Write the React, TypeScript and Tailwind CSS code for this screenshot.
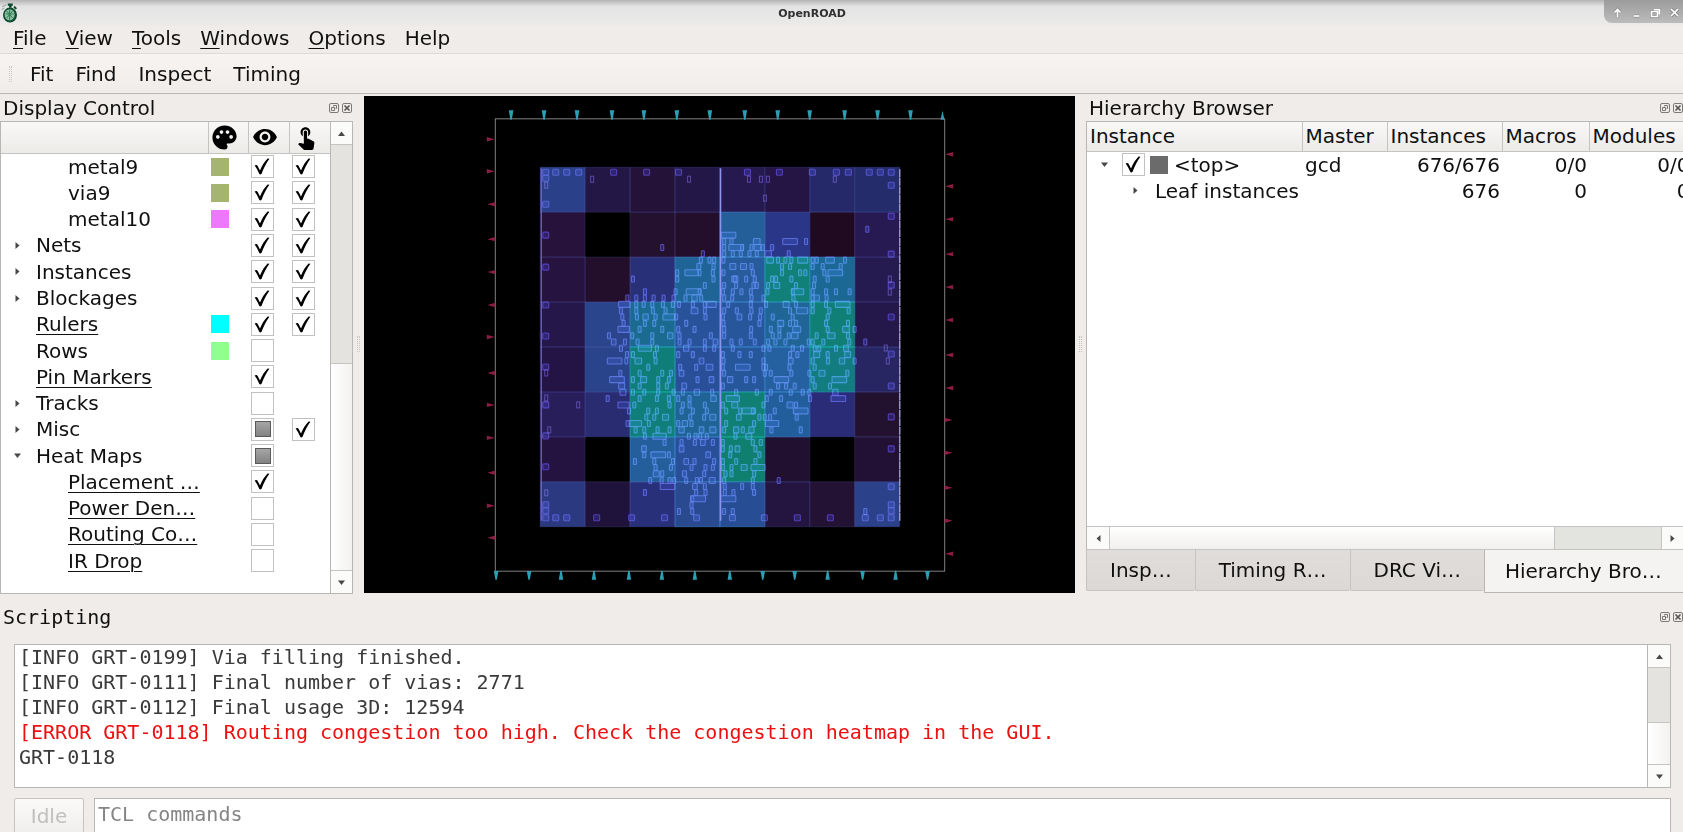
import type { ReactNode } from "react";
import { MdPalette, MdTouchApp, MdVisibility } from "react-icons/md";

type Check = "on" | "off" | "partial" | "none";

type TreeRow = {
  name: string;
  level: 1 | 2;
  arrow?: "right" | "down";
  underline?: boolean;
  swatch?: string;
  visible: Check;
  selectable: Check;
};

const TREE: TreeRow[] = [
  { name: "metal9", level: 2, swatch: "bg-[#a5b56f]", visible: "on", selectable: "on" },
  { name: "via9", level: 2, swatch: "bg-[#a5b56f]", visible: "on", selectable: "on" },
  { name: "metal10", level: 2, swatch: "bg-[#ee78fc]", visible: "on", selectable: "on" },
  { name: "Nets", level: 1, arrow: "right", visible: "on", selectable: "on" },
  { name: "Instances", level: 1, arrow: "right", visible: "on", selectable: "on" },
  { name: "Blockages", level: 1, arrow: "right", visible: "on", selectable: "on" },
  { name: "Rulers", level: 1, underline: true, swatch: "bg-[#00ffff]", visible: "on", selectable: "on" },
  { name: "Rows", level: 1, swatch: "bg-[#90ff90]", visible: "off", selectable: "none" },
  { name: "Pin Markers", level: 1, underline: true, visible: "on", selectable: "none" },
  { name: "Tracks", level: 1, arrow: "right", visible: "off", selectable: "none" },
  { name: "Misc", level: 1, arrow: "right", visible: "partial", selectable: "on" },
  { name: "Heat Maps", level: 1, arrow: "down", visible: "partial", selectable: "none" },
  { name: "Placement …", level: 2, underline: true, visible: "on", selectable: "none" },
  { name: "Power Den…", level: 2, underline: true, visible: "off", selectable: "none" },
  { name: "Routing Co…", level: 2, underline: true, visible: "off", selectable: "none" },
  { name: "IR Drop", level: 2, underline: true, visible: "off", selectable: "none" },
];

const LOG = [
  { text: "[INFO GRT-0199] Via filling finished." },
  { text: "[INFO GRT-0111] Final number of vias: 2771" },
  { text: "[INFO GRT-0112] Final usage 3D: 12594" },
  { text: "[ERROR GRT-0118] Routing congestion too high. Check the congestion heatmap in the GUI.", error: true },
  { text: "GRT-0118" },
];

/* Heat map tile colours, row by row from the top of the core. */
const HEAT = [
  ["#2a4088", "#231746", "#251239", "#231748", "#26194f", "#241544", "#25296a", "#252c6c"],
  ["#26123a", "#000000", "#24102f", "#230e2c", "#245f9a", "#2a3788", "#1f0a21", "#271a52"],
  ["#261340", "#230f2c", "#283077", "#1f6496", "#265b9c", "#108078", "#1c6894", "#261b50"],
  ["#25174a", "#2a458c", "#1b6a90", "#28539a", "#27569b", "#1f6596", "#108076", "#24174a"],
  ["#231445", "#29448b", "#0f7e78", "#284f98", "#26579b", "#2560a0", "#127c80", "#272562"],
  ["#281e5a", "#292c70", "#107e7a", "#1f6494", "#108074", "#235e9c", "#2a2c78", "#22112f"],
  ["#241240", "#000000", "#245f9c", "#284f98", "#0f8070", "#211030", "#000000", "#221135"],
  ["#2b3980", "#20133b", "#29307a", "#2a4a90", "#274e94", "#231540", "#241235", "#2b428a"],
];

/* Denser tiles carry a brighter outline. */
function tileOutline(fill: string) {
  const green = parseInt(fill.slice(3, 5), 16);
  if (green === 0) return { stroke: "none", strokeOpacity: 0 };
  if (green > 0x75) return { stroke: "#1fd0c8", strokeOpacity: 0.4 };
  if (green > 0x48) return { stroke: "#48a0f0", strokeOpacity: 0.4 };
  return { stroke: "#6068c8", strokeOpacity: 0.22 };
}

/* Placed cells: [row centre, "x" or "x/width", …] in thirds of a pixel from (580, 215). */
const CELLS: [number, string][] = [
  [42, "864"],
  [60, "447/44"],
  [79, "434 456 532/20 632/44 680"],
  [97, "248 434 470/44 488 516 534/20 550 578"],
  [116, "370 434 460 484 510 532 566/20 628"],
  [135, "364 390 432 404 572/20 596 618 636 670/30 700 712 752/26 797"],
  [154, "358/12 402 460/18 492/18 516 608 632 700 730 784"],
  [173, "293 336/40 360 400 432 520 608 662 678 735 768/44"],
  [192, "160 293 402 466/18 466 500 526 578 590 636 706 745"],
  [211, "376 434 470 522 532 566 592/18 650 704"],
  [230, "196 288 342/44 360 430 460 486 514 564 640 655/36 700 740 770 811"],
  [249, "143 170 196 222 252 282 318 345/16 365 434 458 516 552 642 700 712/16 742"],
  [268, "134/34 170 192 218 250 280 298 340 376 396/28 446 514 560 620/18 650 700 740 790/44"],
  [287, "124 170 220 258 345/20 376 434 472 516 544 632 668/34 700 750 808"],
  [306, "128 172 198/16 228 268/36 290 378 430 480/14 512 542 580 640 745"],
  [325, "132 196 224 320 432 540 604/18 632 650 740 806"],
  [343, "132/34 180 248 296 345 434 515 574 600 652/24 745 800/20 826"],
  [362, "88 158 218 272/16 300 394 434 514 580 600 628 646/20 712 756/22 806"],
  [381, "102/14 136 174 218 300 330 376 408/14 456 484 526 566 588 618 688 700 732 810 858"],
  [400, "124 196/40 232 320/16 376 404 460 552 570 640 668 706 720 770 800/14"],
  [419, "142 160 226 296 340 430 480 514 632 654 712/18 745 805/18"],
  [438, "105/44 140 176/20 228 366/14 432 552 634/14 700 746 788/16 826"],
  [457, "206 302 350 390/20 430 490/44 552 560 630 706"],
  [475, "122 180 248 274 306/14 434 556 574 636 690 728/18 804"],
  [494, "112/44 160 192/18 236 268 354 396/14 452/16 500 524 606/44 700 780/44"],
  [513, "126/18 180 236 262 314/14 430 596 620 646 706 752"],
  [532, "130/18 160 194 236 282 310 352/16 398 470 532 574 634 670 690 768/16"],
  [551, "84 180 232 268 296 330 402/16 460/40 562 605 692 777/44"],
  [570, "132/34 164 270 310 330 376 430 466/18 552 632/18 650"],
  [588, "148 206 232 306 340 382 440 482 508/40 520 586 664/44"],
  [607, "200 224 258/18 332 374 400/18 478/14 540 556 572 652"],
  [626, "144 168/36 208 296 316/16 336 440 524 578/40"],
  [645, "168 194 234 270 306/16 366/14 400/18 434 470/16 490 516/16 576 664"],
  [664, "196 240/40 328 348 362 382 468 508/18"],
  [683, "255 306 346 370/14 400 430 520 544"],
  [702, "193/14 306/14 430 454 474/14 528"],
  [720, "194 236/44 268 386/14 452 540"],
  [740, "166 224 280 320/14 345 404 430 470 528"],
  [758, "228 274 336 378 400 430 456 494/18 536/42"],
  [777, "230/18 248 315/12 374 438 456 524"],
  [797, "212 246 270 284 320 352 364 398/18 434 520 598"],
  [815, "264/44 346/14 376 436 488 520"],
  [833, "196 350 378 436 462 524"],
  [852, "338 356/44 446/46"],
  [871, "336"],
  [890, "298 338 434 460 858"],
];

/* Tap and pad cells around the core edge. */
const PADS: [number, number][] = [
  [546, 172], [546, 178], [546, 204], [546, 235], [546, 267], [546, 305], [546, 336], [546, 367], [546, 405],
  [546, 436], [546, 467], [546, 505], [546, 511], [546, 518],
  [556, 172], [567, 172], [579, 172], [614, 172], [647, 172], [679, 172], [748, 172], [780, 172], [813, 172],
  [837, 172], [849, 172], [870, 172], [881, 172], [892, 172],
  [892, 185], [892, 216], [892, 254], [892, 285], [892, 317], [892, 354], [892, 386], [892, 417], [892, 449],
  [892, 487], [892, 505], [892, 511], [892, 518],
  [556, 518], [567, 518], [597, 518], [632, 518], [665, 518], [697, 518], [733, 518], [765, 518], [798, 518],
  [831, 518], [866, 518], [881, 518],
];

const EDGE_CELLS: [number, number][] = [
  [546, 185], [546, 373], [546, 398], [549, 430], [546, 493], [592, 179], [689, 179], [749, 179], [761, 179],
  [768, 179], [835, 179], [765, 198], [890, 279], [890, 292], [886, 348], [888, 361], [578, 405],
];

const TOP_PINS = [511, 544, 577, 612, 644, 677, 710, 745, 778, 810, 845, 878, 911];
const BOTTOM_PINS: [number, "up" | "down"][] = [
  [496, "down"], [529, "down"], [561, "up"], [594, "up"], [629, "up"], [662, "up"], [695, "up"], [730, "up"],
  [763, "down"], [795, "down"], [828, "up"], [863, "down"], [896, "up"], [928, "down"],
];
const LEFT_PINS: [number, "left" | "right"][] = [
  [139, "right"], [171, "right"], [204, "left"], [239, "left"], [272, "left"], [305, "left"], [337, "right"],
  [373, "left"], [405, "right"], [438, "right"], [473, "left"], [506, "right"], [538, "left"],
];
const RIGHT_PINS: [number, "left" | "right"][] = [
  [154, "left"], [186, "left"], [219, "left"], [254, "left"], [287, "left"], [320, "left"], [355, "left"],
  [388, "left"], [420, "right"], [453, "right"], [488, "right"], [521, "right"], [554, "left"],
];

function Triangle({ dir }: { dir: "up" | "down" | "left" | "right" }) {
  const points = {
    up: "1,7 8,7 4.5,2.5",
    down: "1,2.5 8,2.5 4.5,7",
    left: "6.5,1 6.5,8 2.5,4.5",
    right: "2.5,1 2.5,8 6.5,4.5",
  }[dir];
  return (
    <svg viewBox="0 0 9 9" className="block size-[9px]" aria-hidden="true">
      <polygon points={points} fill="#484848" />
    </svg>
  );
}

function CheckBox({ state, label }: { state: Check; label: string }) {
  if (state === "none") return null;
  return (
    <span className="grid size-[23px] place-items-center">
      <input
        type="checkbox"
        aria-label={label}
        defaultChecked={state === "on"}
        className="peer col-start-1 row-start-1 size-[23px] appearance-none border border-[#c3c1bf] bg-white"
      />
      {state === "partial" ? (
        <span className="pointer-events-none col-start-1 row-start-1 size-4 border border-[#5a5a5a] bg-linear-to-b from-[#a6a6a6] to-[#838383]" />
      ) : (
        <svg
          viewBox="0 0 23 23"
          className="pointer-events-none invisible col-start-1 row-start-1 size-[23px] peer-checked:visible"
          aria-hidden="true"
        >
          <path d="M3.6 10.6C5 9.6 6.2 9.8 6.8 11.2L9 15.6C10.8 11 13.2 7 16.6 3.6L18.4 3.8C15 8.6 12.6 13 10.6 18.8C9.8 19.6 8.8 19.6 8.2 18.8C7 16 5.6 13.4 3.6 10.6Z" />
        </svg>
      )}
    </span>
  );
}

function DockButtons() {
  return (
    <div className="flex gap-[3px]">
      <button aria-label="Float" className="size-[10px] rounded-[2px] border border-[#7d7b79]">
        <svg viewBox="0 0 8 8" className="block size-2" fill="none" stroke="#777" strokeWidth="1" aria-hidden="true">
          <path d="M1.5 3.5h3v3h-3zM3.5 2.5v-1h3v3h-1" />
        </svg>
      </button>
      <button aria-label="Close" className="size-[10px] rounded-[2px] border border-[#7d7b79]">
        <svg viewBox="0 0 8 8" className="block size-2" stroke="#555" strokeWidth="1.6" aria-hidden="true">
          <path d="M1.5 1.5l5 5M6.5 1.5l-5 5" />
        </svg>
      </button>
    </div>
  );
}

function DockTitle({ children }: { children: ReactNode }) {
  return (
    <div className="flex h-[27px] shrink-0 items-center justify-between pl-[3px]">
      <h2 className="leading-6">{children}</h2>
      <DockButtons />
    </div>
  );
}

function ScrollButton({ dir }: { dir: "up" | "down" }) {
  return (
    <button aria-label={"Scroll " + dir} className="grid h-[22px] shrink-0 place-items-center bg-[#fbfbfa]">
      <Triangle dir={dir} />
    </button>
  );
}

function MenuItem({ hot, rest }: { hot: string; rest: string }) {
  return (
    <button className="leading-6">
      <span className="underline decoration-1 underline-offset-3">{hot}</span>
      {rest}
    </button>
  );
}

function DisplayControl() {
  return (
    <section className="flex w-[353px] shrink-0 flex-col">
      <div className="pr-px">
        <DockTitle>Display Control</DockTitle>
      </div>
      <div className="flex min-h-0 flex-1 border border-[#b9b7b5] bg-white">
        <div className="min-w-0 flex-1">
          <table className="h-[452px] w-full table-fixed border-collapse">
            <colgroup>
              <col />
              <col className="w-10" />
              <col className="w-[41px]" />
              <col className="w-[41px]" />
            </colgroup>
            <thead>
              <tr className="h-[31px] bg-linear-to-b from-[#f9f8f7] to-[#edebe8]">
                <th aria-label="Layer" className="border-r border-b border-[#c6c4c2]" />
                <th className="border-r border-b border-[#c6c4c2] p-0">
                  <MdPalette className="-my-1 ml-px size-[29px] text-black" aria-label="Colour" />
                </th>
                <th className="border-r border-b border-[#c6c4c2] p-0">
                  <MdVisibility className="ml-[3px] size-[26px] text-black" aria-label="Visible" />
                </th>
                <th className="border-b border-[#c6c4c2] p-0">
                  <MdTouchApp className="ml-[3px] size-[26px] text-black" aria-label="Selectable" />
                </th>
              </tr>
            </thead>
            <tbody>
              {TREE.map((row) => (
                <tr key={row.name}>
                  <td className="p-0">
                    <div className="flex h-6 items-center">
                      <span className="flex w-[35px] shrink-0 justify-center pr-[3px]">
                        {row.arrow && <Triangle dir={row.arrow} />}
                      </span>
                      <span className={row.level === 2 ? "pl-8 whitespace-nowrap" : "whitespace-nowrap"}>
                        <span className={row.underline ? "underline decoration-1 underline-offset-3" : ""}>
                          {row.name}
                        </span>
                      </span>
                    </div>
                  </td>
                  <td className="p-0 pl-[3px]">{row.swatch && <div className={"size-[18px] " + row.swatch} />}</td>
                  <td className="p-0 pl-[3px]">
                    <CheckBox state={row.visible} label={row.name + " visible"} />
                  </td>
                  <td className="p-0 pl-[3px]">
                    <CheckBox state={row.selectable} label={row.name + " selectable"} />
                  </td>
                </tr>
              ))}
            </tbody>
          </table>
        </div>
        <div className="flex w-[22px] flex-col border-l border-[#b9b7b5]">
          <ScrollButton dir="up" />
          <div className="h-[220px] border-y border-[#c6c4c2] bg-[#e4e3e0]" />
          <div className="flex-1 border-b border-[#c6c4c2] bg-linear-to-r from-white to-[#f3f2f0]" />
          <ScrollButton dir="down" />
        </div>
      </div>
    </section>
  );
}

function Splitter() {
  return (
    <div className="flex w-[11px] shrink-0 items-center justify-center gap-px">
      <span className="h-4 border-l border-dotted border-[#c9c7c4]" />
      <span className="h-4 border-l border-dotted border-[#c9c7c4]" />
    </div>
  );
}

function LayoutView() {
  return (
    <main className="mt-[2px] mb-px min-w-0 flex-1 bg-black">
      <svg viewBox="364 96 712 497" className="block size-full" role="img" aria-label="Placement density heat map">
        <rect x="495.5" y="118.5" width="450" height="453" fill="none" stroke="#808080" />
        {HEAT.map((line, r) =>
          line.map((fill, c) => (
            <rect key={r + "-" + c} x={540.4 + c * 45} y={167 + r * 45} width="45" height="45" fill={fill} />
          )),
        )}
        {HEAT.map((line, r) =>
          line.map((fill, c) => (
            <rect
              key={r + "-" + c}
              x={540.4 + c * 45}
              y={167 + r * 45}
              width="45"
              height="45"
              fill="none"
              {...tileOutline(fill)}
            />
          )),
        )}
        <g
          fill="#2c32c8"
          fillOpacity="0.3"
          stroke="#483cc8"
          strokeOpacity="0.75"
          strokeWidth="1.1"
          className="mix-blend-screen"
        >
          {PADS.map(([x, y]) => (
            <rect key={x + "," + y} x={x - 3} y={y - 3} width="6" height="6" rx="1" />
          ))}
        </g>
        <g fill="none" stroke="#5c4cb8" strokeOpacity="0.7" strokeWidth="1" className="mix-blend-screen">
          {EDGE_CELLS.map(([x, y]) => (
            <rect key={x + "," + y} x={x - 1} y={y - 3} width="3" height="6" />
          ))}
        </g>
        <g
          transform="translate(580 215) scale(0.33333)"
          fill="#2438d0"
          fillOpacity="0.25"
          stroke="#4850d8"
          strokeOpacity="0.8"
          strokeWidth="3.2"
          className="mix-blend-screen"
        >
          {CELLS.map(([y, items]) =>
            items.split(" ").map((item) => {
              const [x, w = 9] = item.split("/").map(Number);
              return <rect key={y + "-" + item} x={x - w / 2} y={y - 9} width={w} height="18" rx="2" />;
            }),
          )}
        </g>
        <path d="M541.5 168V521" stroke="#7468c8" strokeWidth="1.2" />
        <path d="M721 168V521" stroke="#8c94f0" strokeWidth="1.6" />
        <path d="M900.5 169V521" stroke="#a49dcc" strokeWidth="1.4" strokeDasharray="8 0.6" />
        <g fill="#2b9fb4">
          {TOP_PINS.map((x) => (
            <path key={x} d={`M${x - 2} 110h4.6l-1.6 9.5h-1.4z`} />
          ))}
          <path d="M943.3 110.5l2 9h-4z" />
          {BOTTOM_PINS.map(([x, dir]) => (
            <path
              key={x}
              d={dir === "up" ? `M${x - 0.4} 571h1.4l1.5 9.2h-4.4z` : `M${x - 2} 571.2h4.6l-1.6 8.8h-1.4z`}
            />
          ))}
        </g>
        <g fill="#8c1c40">
          {LEFT_PINS.map(([y, dir]) => (
            <path key={y} d={dir === "right" ? `M487 ${y - 2.2}l8 2.2l-8 2.2z` : `M495.5 ${y - 2.2}l-8 2.2l8 2.2z`} />
          ))}
          {RIGHT_PINS.map(([y, dir]) => (
            <path key={y} d={dir === "right" ? `M945.5 ${y - 2.2}l8 2.2l-8 2.2z` : `M954 ${y - 2.2}l-8 2.2l8 2.2z`} />
          ))}
        </g>
      </svg>
    </main>
  );
}

function HierarchyBrowser() {
  const head = "border-r border-b border-[#c6c4c2] p-0 pl-[3px] text-left font-normal";
  return (
    <section className="flex w-[597px] shrink-0 flex-col overflow-hidden">
      <DockTitle>Hierarchy Browser</DockTitle>
      <div className="flex min-h-0 flex-1 flex-col overflow-hidden border-t border-l border-[#b9b7b5] bg-white">
        <div className="flex-1">
          <table className="w-[605px] table-fixed border-collapse">
            <colgroup>
              <col className="w-[215px]" />
              <col className="w-[85px]" />
              <col className="w-[115px]" />
              <col className="w-[87px]" />
              <col />
            </colgroup>
            <thead>
              <tr className="h-[29px] bg-linear-to-b from-[#f9f8f7] to-[#edebe8]">
                <th className={head}>Instance</th>
                <th className={head}>Master</th>
                <th className={head}>Instances</th>
                <th className={head}>Macros</th>
                <th className={head}>Modules</th>
              </tr>
            </thead>
            <tbody className="text-right">
              <tr className="h-[26px]">
                <td className="p-0">
                  <div className="flex h-[26px] items-center">
                    <span className="flex w-[35px] justify-center">
                      <Triangle dir="down" />
                    </span>
                    <CheckBox state="on" label="<top> visible" />
                    <span className="mr-[6px] ml-[5px] size-[18px] bg-[#6b6b6b]" />
                    {"<top>"}
                  </div>
                </td>
                <td className="p-0 pl-[3px] text-left">gcd</td>
                <td className="p-0 pr-[2px]">676/676</td>
                <td className="p-0 pr-[2px]">0/0</td>
                <td className="p-0 pr-[2px]">0/0</td>
              </tr>
              <tr className="h-[26px]">
                <td className="p-0">
                  <div className="flex h-6 items-center">
                    <span className="flex w-[68px] justify-end pr-[15px]">
                      <Triangle dir="right" />
                    </span>
                    Leaf instances
                  </div>
                </td>
                <td className="p-0" />
                <td className="p-0 pr-[2px]">676</td>
                <td className="p-0 pr-[2px]">0</td>
                <td className="p-0 pr-[2px]">0</td>
              </tr>
            </tbody>
          </table>
        </div>
        <div className="flex h-6 shrink-0 border-y border-[#c6c4c2]">
          <button aria-label="Scroll left" className="grid w-[23px] place-items-center border-r border-[#c6c4c2] bg-[#fbfbfa]">
            <Triangle dir="left" />
          </button>
          <div className="flex-1 bg-linear-to-b from-white to-[#f1f0ee]" />
          <div className="w-[108px] border-x border-[#c6c4c2] bg-[#e3e3df]" />
          <button aria-label="Scroll right" className="grid w-[21px] place-items-center bg-[#fbfbfa]">
            <Triangle dir="right" />
          </button>
        </div>
      </div>
      <div className="flex h-11 shrink-0 items-start pb-px" role="tablist">
        {["Insp…", "Timing R…", "DRC Vi…"].map((name) => (
          <button
            key={name}
            role="tab"
            aria-selected="false"
            className="h-[41px] rounded-b-xs border-b border-l border-[#c6c4c2] bg-linear-to-b from-[#e0ddda] to-[#dbd8d5] px-[23px] whitespace-nowrap"
          >
            {name}
          </button>
        ))}
        <button
          role="tab"
          aria-selected="true"
          className="h-[43px] flex-1 border-b border-l border-[#b9b7b5] bg-[#f5f3f1] pl-[20px] text-left whitespace-nowrap"
        >
          Hierarchy Bro…
        </button>
      </div>
    </section>
  );
}

function Scripting() {
  return (
    <section className="h-[238px] shrink-0 overflow-hidden font-['DejaVu_Sans_Mono',monospace]">
      <div className="flex h-[50px] items-center justify-between pb-1 pl-[3px]">
        <h2>Scripting</h2>
        <DockButtons />
      </div>
      <div className="mr-3 ml-[14px] flex h-[144px] border border-[#b9b7b5] bg-white">
        <div className="min-w-0 flex-1 px-1 text-[#3a3a3a]" role="log">
          {LOG.map((line) => (
            <p key={line.text} className={line.error ? "leading-[25px] text-[#ee1010]" : "leading-[25px]"}>
              {line.text}
            </p>
          ))}
        </div>
        <div className="flex w-[23px] flex-col border-l border-[#b9b7b5]">
          <ScrollButton dir="up" />
          <div className="h-14 border-y border-[#c6c4c2] bg-[#e4e3e0]" />
          <div className="flex-1 border-b border-[#c6c4c2] bg-linear-to-r from-white to-[#f3f2f0]" />
          <ScrollButton dir="down" />
        </div>
      </div>
      <div className="mt-[10px] mr-3 ml-[14px] flex gap-[10px]">
        <button
          disabled
          className="h-10 w-[70px] rounded-xs border border-[#c6c4c2] bg-linear-to-b from-[#fbfaf9] to-[#efedeb] pb-1 font-['DejaVu_Sans',sans-serif] text-[#bfbfbd]"
        >
          Idle
        </button>
        <input
          aria-label="TCL commands"
          placeholder="TCL commands"
          className="h-10 min-w-0 flex-1 border border-[#b9b7b5] bg-white px-[3px] pb-2 placeholder:text-[#858585]"
        />
      </div>
    </section>
  );
}

export default function App() {
  return (
    <div className="flex h-screen flex-col overflow-hidden bg-[#efece9] font-['DejaVu_Sans',sans-serif] text-[20px] leading-6 text-[#101010]">
      <header className="flex h-[26px] shrink-0 items-center bg-linear-to-b from-[#b4b4b4] via-[#e4e4e4] via-25% to-[#ecebea]">
        <svg viewBox="0 0 20 22" className="h-[22px] w-5" aria-label="OpenROAD">
          <ellipse cx="10" cy="13" rx="7" ry="7.6" fill="#0d4a30" />
          <ellipse cx="9.6" cy="12.8" rx="5" ry="5.6" fill="#8fc0a0" />
          <path d="M5.6 12h8M9.6 7.5v11M6.6 9l6 7M12.6 9l-6 7" stroke="#2c7a52" strokeWidth="1" />
          <path d="M7.8 1.6h5v2.2h-1.2v2H9v-2H7.8zM14.6 3.8l2.4 2.4-1.4 1.4-2.2-2.2z" fill="#0d4a30" />
          <path d="M2.2 4.8l4-2M1.6 7.6L4.4 6" stroke="#7fa890" strokeWidth="1" />
        </svg>
        <h1 className="flex-1 pt-px text-center text-[11px] font-bold text-[#303030]">OpenROAD</h1>
        <div className="flex h-[23px] w-[79px] items-center justify-between self-start rounded-bl-lg bg-linear-to-b from-[#9c9c9c] to-[#bcbcbc] pt-[2px] pr-[3px] pl-2">
          {[
            ["Shade", "M5.5 10V2.5M2.5 5.5l3-3 3 3"],
            ["Minimize", "M3 9h5"],
            ["Restore", "M1.5 4.5h6v5h-6zM4 2.5h5.5v5"],
            ["Close", "M2 2l7 7M9 2l-7 7"],
          ].map(([name, d]) => (
            <button key={name} aria-label={name}>
              <svg viewBox="0 0 11 11" className="block size-[11px]" aria-hidden="true">
                <path d={d} fill="none" stroke="#8a8a8a" strokeWidth="3.2" />
                <path d={d} fill="none" stroke="#ffffff" strokeWidth="1.7" />
              </svg>
            </button>
          ))}
        </div>
      </header>
      <nav
        className="flex h-[28px] shrink-0 items-center gap-[19px] border-b border-[#dddad7] pb-[3px] pl-[13px]"
        aria-label="Menu"
      >
        <MenuItem hot="F" rest="ile" />
        <MenuItem hot="V" rest="iew" />
        <MenuItem hot="T" rest="ools" />
        <MenuItem hot="W" rest="indows" />
        <MenuItem hot="O" rest="ptions" />
        <MenuItem hot="" rest="Help" />
      </nav>
      <div className="flex h-10 shrink-0 items-center gap-[22px] border-b border-[#b9b7b5] bg-linear-to-b from-[#f7f4f2] to-[#efece9] pt-px pl-[9px]">
        <span className="-mr-1 h-4 w-[3px] border-x border-dotted border-[#c9c7c4]" />
        <button>Fit</button>
        <button>Find</button>
        <button>Inspect</button>
        <button>Timing</button>
      </div>
      <div className="flex min-h-0 flex-1">
        <DisplayControl />
        <Splitter />
        <LayoutView />
        <Splitter />
        <HierarchyBrowser />
      </div>
      <Scripting />
    </div>
  );
}
